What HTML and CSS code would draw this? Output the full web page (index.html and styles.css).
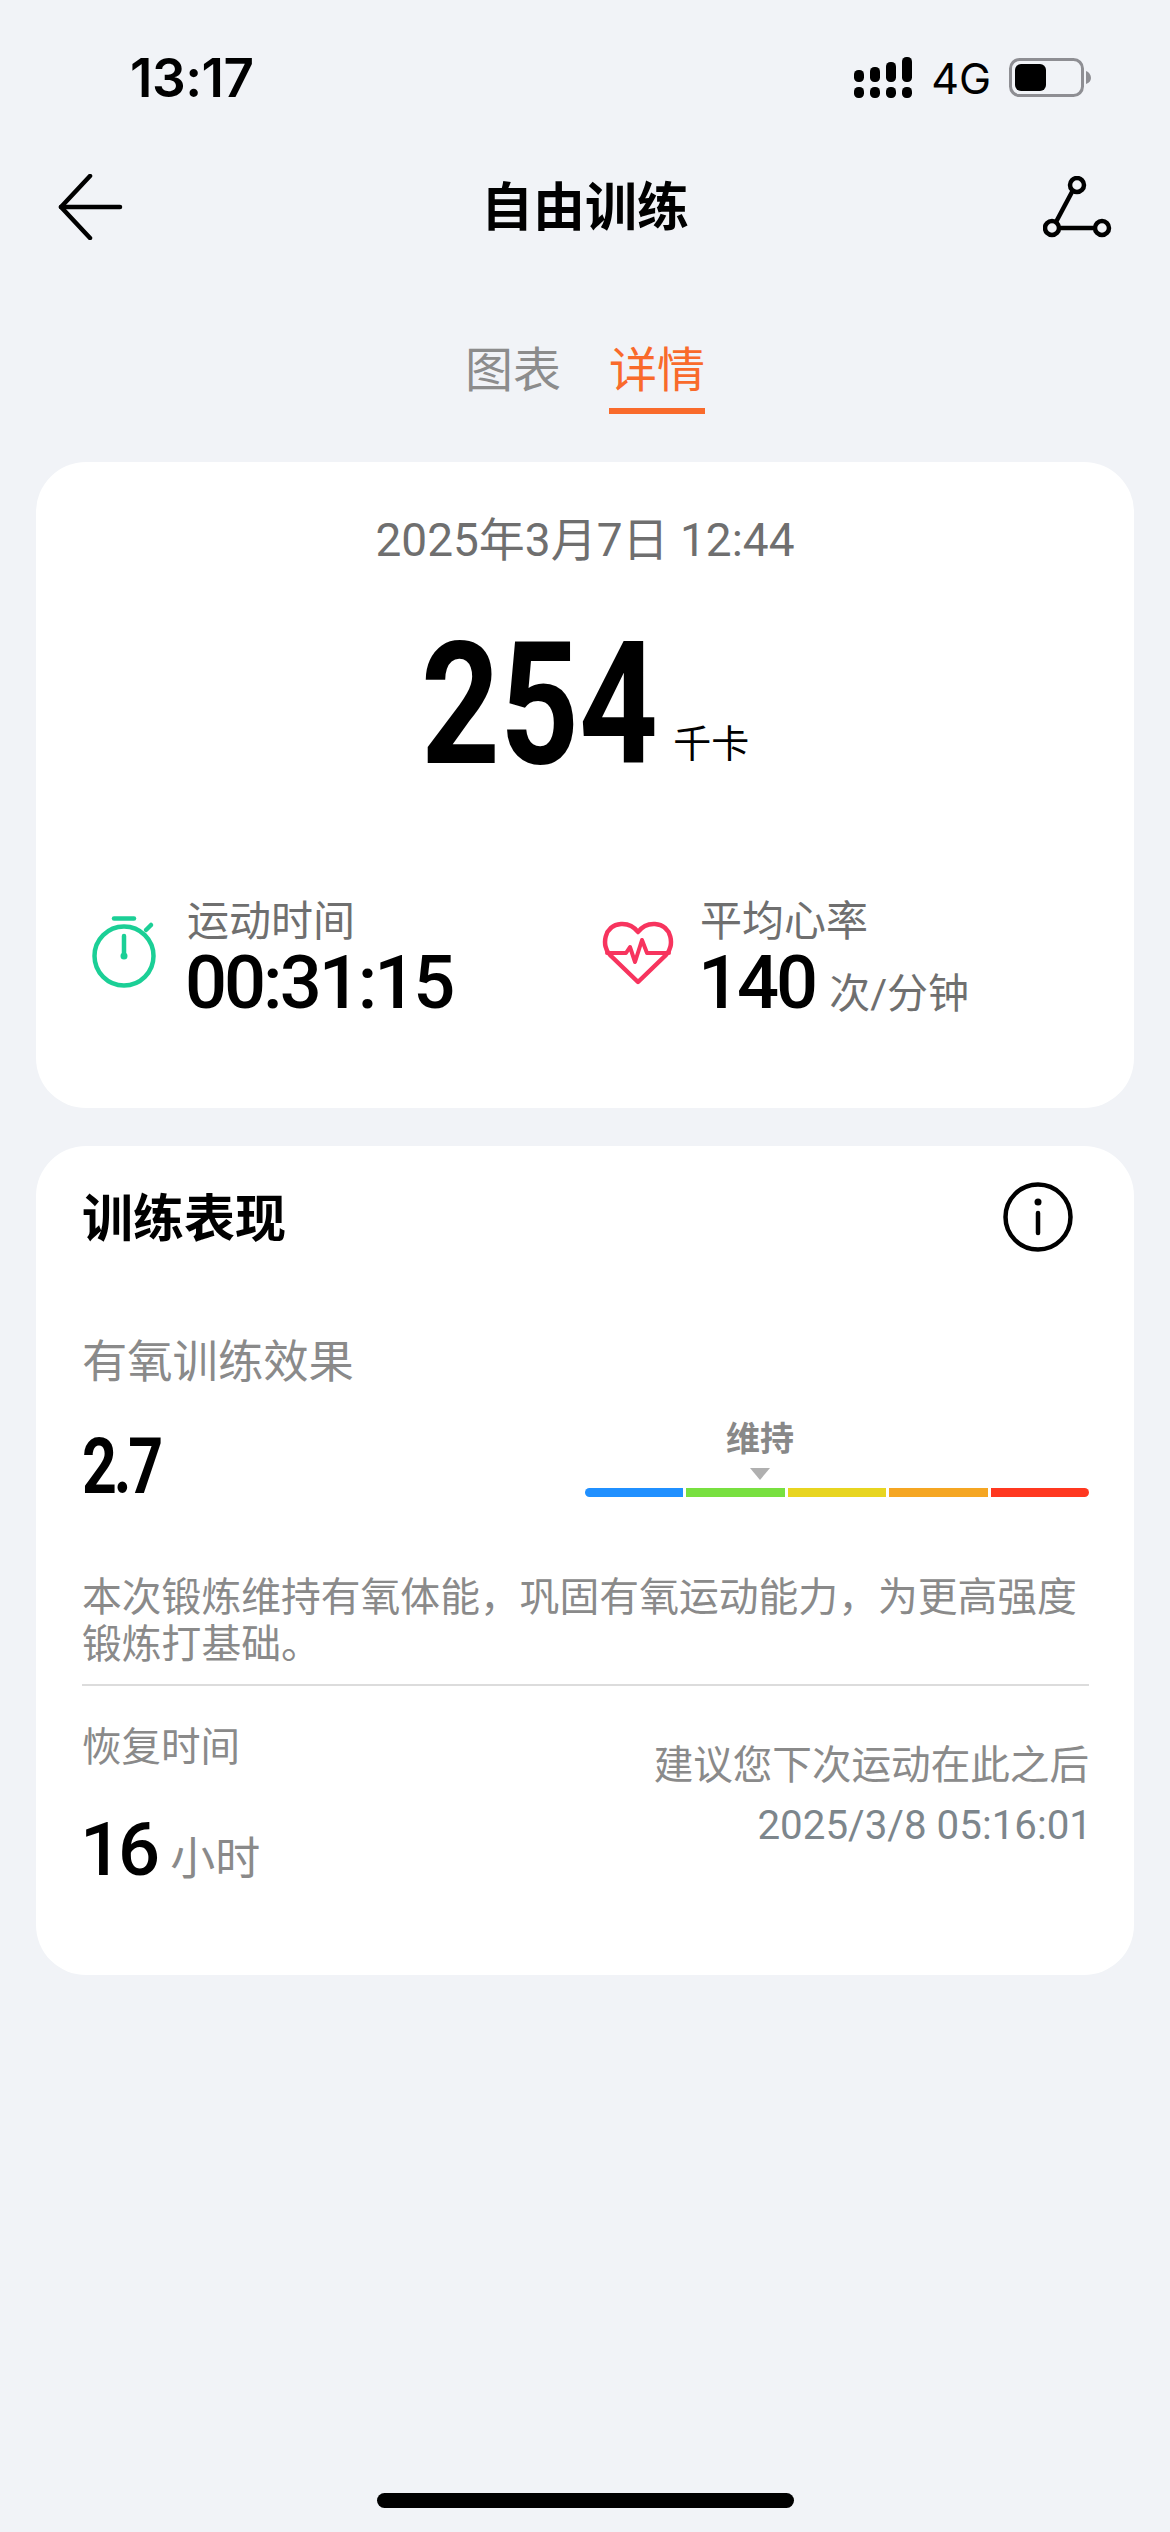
FILE: index.html
```html
<!DOCTYPE html>
<html lang="zh-CN">
<head>
<meta charset="utf-8">
<title>自由训练</title>
<link rel="stylesheet" href="styles.css">
</head>
<body>
<div class="page">
  <header class="status">
    <span class="clock">13:17</span>
    <div class="status-right">
      <svg class="signal" width="58" height="42" viewBox="0 0 58 42" fill="#000">
        <rect x="0" y="13" width="10" height="12" rx="4.5"/><rect x="16" y="10" width="10" height="15" rx="4.5"/><rect x="32" y="5" width="10" height="20" rx="4.5"/><rect x="48" y="0" width="10" height="25" rx="4.5"/>
        <rect x="0" y="30" width="10" height="11" rx="4.5"/><rect x="16" y="30" width="10" height="11" rx="4.5"/><rect x="32" y="30" width="10" height="11" rx="4.5"/><rect x="48" y="30" width="10" height="11" rx="4.5"/>
      </svg>
      <span class="net">4G</span>
      <svg class="battery" width="82" height="40" viewBox="0 0 82 40">
        <rect x="1.500" y="1.500" width="72" height="36" rx="9" fill="none" stroke="#8e8e93" stroke-width="3"/>
        <rect x="6" y="6" width="31" height="27" rx="6" fill="#000"/>
        <path d="M77 13 C80 14 82 17 82 20 C82 23 80 25 77 26 Z" fill="#8e8e93"/>
      </svg>
    </div>
  </header>

  <nav class="nav">
    <svg class="nav-back" width="66" height="66" viewBox="0 0 66 66" fill="none" stroke="#000" stroke-width="4.5" stroke-linecap="round" stroke-linejoin="round">
      <path d="M32 2 L3 33 L32 64"/><path d="M3 33 H62"/>
    </svg>
    <h1 class="nav-title">自由训练</h1>
    <svg class="nav-route" width="70" height="64" viewBox="0 0 70 64" fill="none" stroke="#000" stroke-width="4.5">
      <circle cx="34" cy="9" r="7"/><circle cx="9" cy="52" r="7"/><circle cx="59" cy="52" r="7"/>
      <path d="M29.5 15 L13 46"/><path d="M16 52 H52"/>
    </svg>
  </nav>

  <div class="tabs">
    <span class="tab">图表</span>
    <span class="tab tab-active">详情</span>
  </div>

  <section class="card card-summary">
    <div class="date">2025年3月7日 12:44</div>
    <div class="hero">
      <span class="hero-num">254</span>
      <span class="hero-unit">千卡</span>
    </div>
    <div class="stats">
      <div class="stat">
        <svg class="stat-icon" width="72" height="72" viewBox="0 0 72 72" fill="none" stroke="#1bcf96" stroke-width="4.5" stroke-linecap="round">
          <circle cx="36" cy="40" r="29.5"/>
          <path d="M26 2.500 H46"/><path d="M58 14 L63 9"/><path d="M36 20 V40"/>
          <circle cx="36" cy="40" r="2.500" fill="#1bcf96" stroke-width="2"/>
        </svg>
        <div class="stat-text">
          <div class="stat-label">运动时间</div>
          <div class="stat-value"><span class="num">00:31:15</span></div>
        </div>
      </div>
      <div class="stat stat-hr">
        <svg class="stat-icon" width="72" height="64" viewBox="0 0 72 64" fill="none" stroke="#f7345e" stroke-width="4.5" stroke-linecap="round" stroke-linejoin="round">
          <path d="M36 61 L8 34 C-1 25 2 4 19 3 C27 2.500 33 7 36 11 C39 7 45 2.500 53 3 C70 4 73 25 64 34 Z"/>
          <path d="M5 32 H24 L28 26 L33 41 L40 19 L45 32 H67" stroke-width="4"/>
        </svg>
        <div class="stat-text">
          <div class="stat-label">平均心率</div>
          <div class="stat-value"><span class="num">140</span><span class="stat-unit">次/分钟</span></div>
        </div>
      </div>
    </div>
  </section>

  <section class="card card-perf">
    <div class="perf-head">
      <h2 class="perf-title">训练表现</h2>
      <svg class="perf-info" width="70" height="70" viewBox="0 0 70 70" fill="none" stroke="#000" stroke-width="4.500">
        <circle cx="35" cy="35" r="32.500"/>
        <circle cx="35" cy="20" r="3.500" fill="#000" stroke="none"/>
        <path d="M35 31 V51" stroke-linecap="round"/>
      </svg>
    </div>
    <div class="perf-label">有氧训练效果</div>
    <div class="effect">
      <span class="effect-num">2.7</span>
      <div class="scale">
        <div class="scale-mark">
          <span class="scale-name">维持</span>
          <span class="scale-tri"></span>
        </div>
        <div class="scale-bar">
          <span class="seg seg-blue"></span>
          <span class="seg seg-green"></span>
          <span class="seg seg-yellow"></span>
          <span class="seg seg-orange"></span>
          <span class="seg seg-red"></span>
        </div>
      </div>
    </div>
    <p class="desc">本次锻炼维持有氧体能，巩固有氧运动能力，为更高强度锻炼打基础。</p>
    <div class="rule"></div>
    <div class="recovery">
      <div class="recovery-left">
        <div class="recovery-label">恢复时间</div>
        <div class="recovery-value"><span class="num num-rec">16</span><span class="recovery-unit">小时</span></div>
      </div>
      <div class="recovery-right">
        <div>建议您下次运动在此之后</div>
        <div class="recovery-date">2025/3/8 05:16:01</div>
      </div>
    </div>
  </section>

  <div class="home"></div>
</div>
</body>
</html>
```
FILE: styles.css
```css
* { box-sizing: border-box; }
html, body { margin: 0; padding: 0; }
body {
  width: 1170px;
  height: 2532px;
  background: #f1f3f7;
  font-family: Roboto, "Noto Sans CJK SC", sans-serif;
  color: #000;
  overflow: hidden;
}
.page { width: 1170px; height: 2532px; display: flex; flex-direction: column; position: relative; }

.status { height: 156px; display: flex; align-items: center; justify-content: space-between; padding: 0 79px 0 130px; }
.clock { font-family: Inter, sans-serif; font-size: 53px; font-weight: 600; letter-spacing: -.5px; }
.status-right { display: flex; align-items: center; }
.signal { display: block; }
.net { font-family: Inter, sans-serif; font-size: 43px; margin: 0 18px 0 19px; line-height: 50px; }
.battery { display: block; }

.nav { height: 102px; display: flex; align-items: center; justify-content: space-between; padding: 0 58px; position: relative; }
.nav-title { position: absolute; left: 0; right: 0; margin: 0; padding-top: 3px; text-align: center; font-size: 52px; font-weight: 700; line-height: 62px; }
.nav-back { display: block; }
.nav-route { display: block; margin-right: -1px; margin-top: 2px; }

.tabs { display: flex; justify-content: center; gap: 48px; margin-top: 83px; }
.tab { font-size: 48px; line-height: 60px; color: #8c8c8c; padding-bottom: 7px; border-bottom: 6px solid transparent; }
.tab-active { color: #f96a2b; border-bottom-color: #f96a2b; }

.card { background: #fff; border-radius: 50px; margin: 0 36px; }
.card-summary { height: 646px; margin-top: 48px; padding-top: 54px; }
.date { text-align: center; font-size: 46px; line-height: 48px; color: #6f6f6f; }
.hero { display: flex; justify-content: center; align-items: baseline; margin-top: 41px; height: 200px; }
.hero-num { font-size: 170px; line-height: 200px; font-weight: 700; transform: scaleX(.81); transform-origin: left; margin-right: -54px; }
.hero-unit { font-size: 38px; margin-left: 14px; transform: translateY(-6px); }

.stats { display: flex; margin-top: 92px; padding-left: 52px; }
.stat { display: flex; width: 515px; }
.stat-icon { display: block; margin-top: 19px; margin-right: 27px; flex: none; }
.stat-hr .stat-icon { margin-top: 24px; margin-left: -1px; margin-right: 26px; }
.stat-text { display: flex; flex-direction: column; }
.stat-label { font-size: 42px; line-height: 50px; color: #6f6f6f; }
.stat-value { display: flex; align-items: baseline; line-height: 72px; }
.num { font-size: 74px; font-weight: 500; letter-spacing: -3px; margin-left: -2px; }
.stat-unit { font-size: 41px; color: #6f6f6f; margin-left: 14px; }

.card-perf { height: 829px; margin-top: 38px; padding: 0 45px 0 46px; }
.perf-head { display: flex; justify-content: space-between; align-items: center; height: 142px; padding-right: 16px; }
.perf-title { margin: 6px 0 0; font-size: 51px; font-weight: 700; line-height: 60px; }
.perf-label { margin-top: 45px; font-size: 45.300px; line-height: 60px; color: #8a8a8a; }
.effect { display: flex; justify-content: space-between; align-items: flex-end; height: 119px; }
.effect-num { font-size: 78px; line-height: 90px; font-weight: 700; letter-spacing: -4px; transform: scaleX(.78); transform-origin: left; }
.scale { width: 504px; display: flex; flex-direction: column; margin-bottom: 15px; }
.scale-mark { display: flex; flex-direction: column; align-items: center; width: 68px; margin-left: 141px; }
.scale-name { font-size: 34px; line-height: 42px; font-weight: 700; color: #888; white-space: nowrap; }
.scale-tri { width: 0; height: 0; border-left: 10px solid transparent; border-right: 10px solid transparent; border-top: 12px solid #b0b0b0; margin-top: 8px; margin-bottom: 8px; }
.scale-bar { display: flex; gap: 3px; height: 9px; border-radius: 5px; overflow: hidden; }
.seg { flex: 1; }
.seg-blue { background: #2090ff; }
.seg-green { background: #78e040; }
.seg-yellow { background: #e8d520; }
.seg-orange { background: #f5a623; }
.seg-red { background: #ff3820; }
.desc { margin: 62px 0 0; font-size: 39.8px; line-height: 47px; color: #8a8a8a; }
.rule { height: 2px; background: #dcdcdc; margin-top: 16px; }
.recovery { display: flex; justify-content: space-between; }
.recovery-left { margin-top: 37px; }
.recovery-label { font-size: 39.500px; line-height: 50px; color: #8a8a8a; }
.recovery-value { display: flex; align-items: baseline; margin-top: 37px; line-height: 80px; }
.num-rec { letter-spacing: -4px; }
.recovery-unit { font-size: 45px; color: #8a8a8a; margin-left: 14px; }
.recovery-right { text-align: right; font-size: 39.6px; line-height: 60px; color: #8a8a8a; margin-top: 50px; }
.recovery-date { color: #7d868c; font-size: 40.3px; margin-right: -3px; }

.home { position: absolute; left: 377px; top: 2493px; width: 417px; height: 15px; border-radius: 8px; background: #000; }
```
